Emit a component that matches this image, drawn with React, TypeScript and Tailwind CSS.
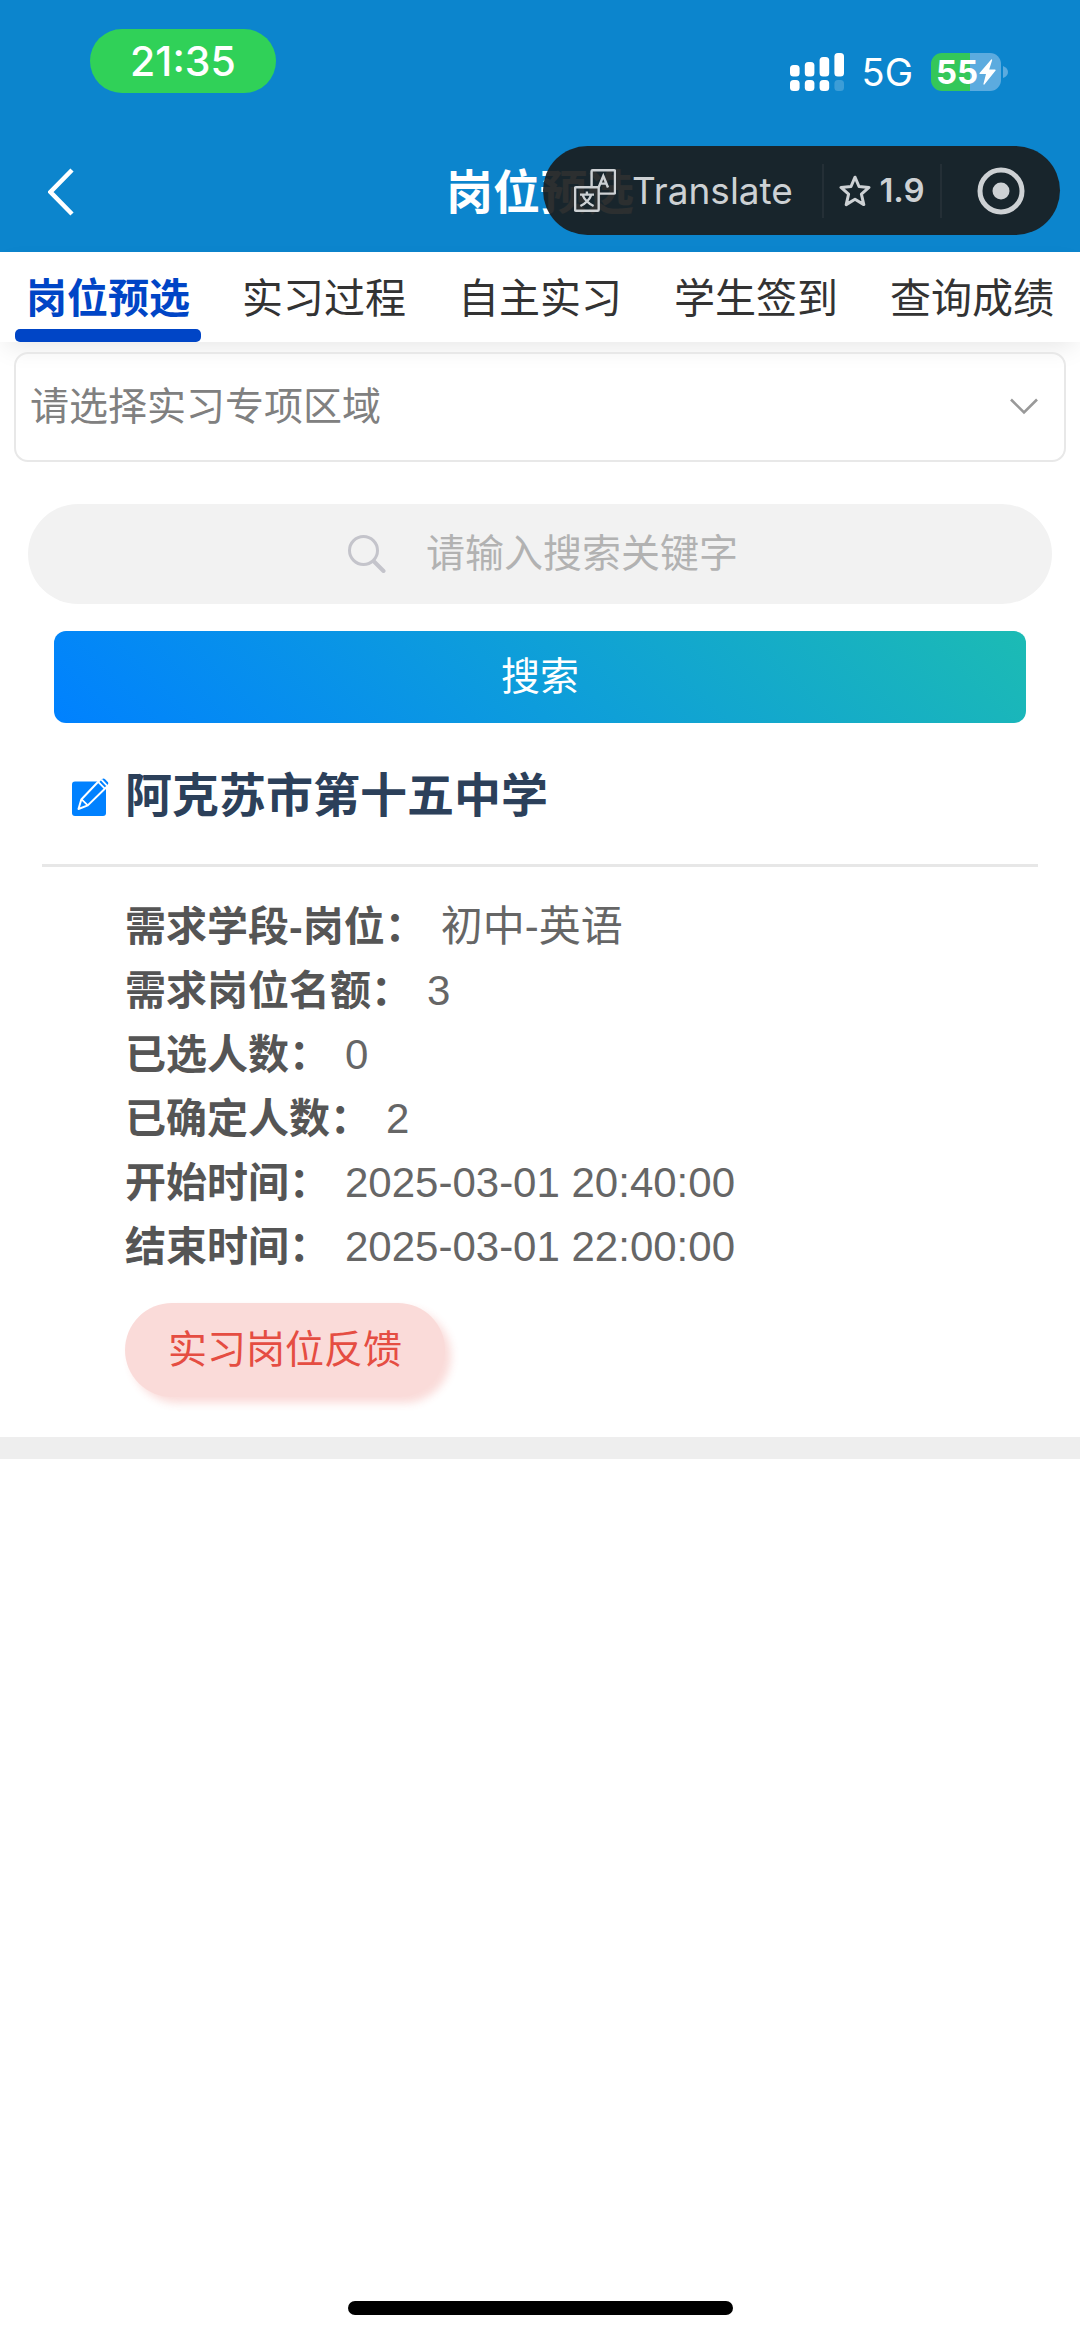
import React, { useState } from "react";

const tabs = ["岗位预选", "实习过程", "自主实习", "学生签到", "查询成绩"];

interface Field {
  label: string;
  value: string;
}

const fields: Field[] = [
  { label: "需求学段-岗位：", value: "初中-英语" },
  { label: "需求岗位名额：", value: "3" },
  { label: "已选人数：", value: "0" },
  { label: "已确定人数：", value: "2" },
  { label: "开始时间：", value: "2025-03-01 20:40:00" },
  { label: "结束时间：", value: "2025-03-01 22:00:00" },
];

const SignalIcon = () => (
  <svg width="54" height="38" viewBox="0 0 54 38" fill="white" aria-hidden="true">
    <rect x="0" y="12" width="9.6" height="11.5" rx="3.5" />
    <rect x="14.8" y="9" width="9.6" height="14.5" rx="3.5" />
    <rect x="29.6" y="4" width="9.6" height="19.5" rx="3.5" />
    <rect x="44.4" y="0" width="9.6" height="23.5" rx="3.5" />
    <rect x="0" y="27" width="9.6" height="11" rx="3.5" />
    <rect x="14.8" y="27" width="9.6" height="11" rx="3.5" />
    <rect x="29.6" y="27" width="9.6" height="11" rx="3.5" />
    <rect x="44.4" y="27" width="9.6" height="11" rx="3.5" opacity="0.2" />
  </svg>
);

const Battery = () => (
  <div className="flex items-center gap-[2px]">
    <div className="flex h-[38px] w-[70px] items-center justify-center gap-px rounded-[11px] bg-[linear-gradient(90deg,#34c759_56%,#5cabdf_56%)] text-[33px] leading-none font-bold text-white">
      <span>55</span>
      <svg width="17" height="26" viewBox="0 0 17 26" fill="white" aria-hidden="true">
        <path d="M12.2 0.4 L0.6 14 Q0 15 1.2 15 H7 L4.4 25 Q4.6 26 5.4 25.4 L16.6 11.6 Q17 10.4 15.8 10.4 H10.2 L13.2 1 Q13 -0.2 12.2 0.4Z" />
      </svg>
    </div>
    <svg width="5" height="12" viewBox="0 0 5 12" fill="#5cabdf" aria-hidden="true">
      <path d="M0 0 Q5 2 5 6 T0 12Z" />
    </svg>
  </div>
);

const StatusBar = () => (
  <div className="flex h-[132px] items-start justify-between pt-[29px] pr-[72px] pl-[90px] font-['Inter',sans-serif] text-white">
    <div className="flex h-16 w-[186px] items-center justify-center rounded-full bg-[#30d158] text-[41px] leading-none font-medium">
      21:35
    </div>
    <div className="flex items-center gap-[18px] pt-6">
      <SignalIcon />
      <span className="text-[38px] leading-none">5G</span>
      <Battery />
    </div>
  </div>
);

const TranslateIcon = () => (
  <svg
    width="42"
    height="43"
    viewBox="0 0 42 43"
    fill="none"
    stroke="currentColor"
    strokeWidth="2.4"
    aria-hidden="true"
  >
    <path d="M17.6 17 V2.2 Q17.6 1.2 18.6 1.2 H40 Q41 1.2 41 2.2 V23.6 Q41 24.6 40 24.6 H25" />
    <rect x="1.1" y="18.2" width="23.6" height="23.6" rx="1" />
    <path d="M24.6 18.5 L29.3 7 L34 18.5 M26.2 14.6 H32.4" />
    <path d="M6 25.6 H20 M12.9 22.4 V25.6 M17.4 25.6 Q14.6 33 6.4 37 M8.4 25.6 Q11.4 33 19.6 37" />
  </svg>
);

const Capsule = () => (
  <div className="absolute top-[14px] right-5 flex h-[89px] w-[517px] items-center rounded-full bg-[rgba(26,29,30,0.92)] font-['Inter',sans-serif] text-[#cdd1d4]">
    <button type="button" className="flex flex-1 items-center gap-4 pl-[31px]">
      <TranslateIcon />
      <span className="text-[37px] leading-none">Translate</span>
    </button>
    <button
      type="button"
      className="flex h-[54px] w-[120px] items-center justify-center gap-2 border-x-2 border-[#242f36] text-[33px] leading-none font-semibold"
    >
      <svg
        width="32"
        height="32"
        viewBox="0 0 32 32"
        fill="none"
        stroke="currentColor"
        strokeWidth="3"
        strokeLinejoin="round"
        aria-hidden="true"
      >
        <path d="M16 2.2 L20 11.5 L30 12.4 L22.4 19.2 L24.8 29.6 L16 24.2 L7.2 29.6 L9.6 19.2 L2 12.4 L12 11.5Z" />
      </svg>
      1.9
    </button>
    <button type="button" aria-label="关闭" className="flex w-[118px] justify-center">
      <svg width="48" height="48" viewBox="0 0 48 48" fill="none" aria-hidden="true">
        <circle cx="24" cy="24" r="21" stroke="currentColor" strokeWidth="5" />
        <circle cx="24" cy="24" r="8.5" fill="currentColor" />
      </svg>
    </button>
  </div>
);

const Header = () => (
  <header className="bg-[#0c85cd]">
    <StatusBar />
    <div className="relative flex h-[120px] items-center justify-center">
      <button type="button" aria-label="返回" className="absolute left-12">
        <svg
          width="26"
          height="48"
          viewBox="0 0 26 48"
          fill="none"
          stroke="white"
          strokeWidth="4.5"
          aria-hidden="true"
        >
          <path d="M24 2 L2.5 24 L24 46" />
        </svg>
      </button>
      <h1 className="text-[47px] leading-none font-semibold text-white">岗位预选</h1>
      <Capsule />
    </div>
  </header>
);

const EditIcon = () => (
  <svg width="38" height="40" viewBox="0 0 38 40" className="flex-none" aria-hidden="true">
    <rect x="0" y="5.5" width="34" height="34.5" rx="3" fill="#0081ff" />
    <path
      d="M6.5 33 L9.3 23.5 L29.5 2.2 Q31.5 0.4 33.6 2.4 L36.4 5.2 Q38.2 7.2 36.4 9.2 L15.8 29.4 Z"
      fill="#0081ff"
      stroke="white"
      strokeWidth="2"
      strokeLinejoin="round"
    />
    <path d="M9.6 23.4 L15.8 29.4 M26.2 5.8 L32.6 12.4 M29.4 3.6 L35 9.6" stroke="white" strokeWidth="1.8" />
  </svg>
);

export default function App() {
  const [active, setActive] = useState(0);

  return (
    <div className="flex min-h-screen flex-col bg-white font-['Liberation_Sans','Noto_Sans_CJK_SC',sans-serif]">
      <Header />
      <nav className="relative flex h-[90px] shadow-[0_10px_24px_-6px_rgba(0,0,0,0.1)]">
        {tabs.map((tab, i) => (
          <button
            key={tab}
            type="button"
            onClick={() => setActive(i)}
            className={`flex flex-1 flex-col items-center justify-between pt-[22px] text-[41px] leading-[50px] ${
              i === active ? "font-semibold text-[#0045c6]" : "text-[#333333]"
            }`}
          >
            {tab}
            {i === active && <span className="h-[13px] w-[186px] rounded-[5px] bg-[#0045c6]" />}
          </button>
        ))}
      </nav>

      <main className="flex-1">
        <div className="relative mx-[14px] mt-[10px]">
          <select
            aria-label="实习专项区域"
            className="h-[110px] w-full appearance-none rounded-[14px] border-2 border-[#e8e8e8] bg-transparent px-[14px] text-[39px] text-[#808080]"
          >
            <option>请选择实习专项区域</option>
          </select>
          <svg
            className="pointer-events-none absolute top-[46px] right-[28px]"
            width="28"
            height="17"
            viewBox="0 0 28 17"
            fill="none"
            stroke="#999999"
            strokeWidth="2.6"
            aria-hidden="true"
          >
            <path d="M1 1.5 L14 14.5 L27 1.5" />
          </svg>
        </div>

        <label className="mx-7 mt-[42px] flex h-[100px] items-center justify-center gap-10 rounded-full bg-[#f2f2f2] pl-2">
          <svg
            width="38"
            height="38"
            viewBox="0 0 38 38"
            fill="none"
            stroke="#c4c4cb"
            strokeLinecap="round"
            aria-hidden="true"
          >
            <circle cx="15.5" cy="15.5" r="14" strokeWidth="3" />
            <path d="M26 26.5 L35.5 36" strokeWidth="4" />
          </svg>
          <input
            type="text"
            aria-label="搜索关键字"
            placeholder="请输入搜索关键字"
            className="w-[314px] bg-transparent text-[39px] outline-none placeholder:text-[#b2b2b2]"
          />
        </label>

        <div className="mt-[27px] px-[54px]">
          <button
            type="button"
            className="h-[92px] w-full rounded-xl bg-[linear-gradient(45deg,#0081ff,#1cbbb4)] text-[39px] text-white"
          >
            搜索
          </button>
        </div>

        <article>
          <div className="mx-[42px] flex h-[144px] items-center gap-[15px] border-b-[3px] border-[#e7e7e7] pt-1 pl-[30px]">
            <EditIcon />
            <h2 className="text-[47px] leading-none font-semibold text-[#2c405a]">阿克苏市第十五中学</h2>
          </div>
          <div className="px-[125px] pt-7 pb-10">
            <dl className="text-[42px] leading-[64px]">
              {fields.map(({ label, value }) => (
                <div key={label} className="flex gap-[15px]">
                  <dt className="text-[41px] font-semibold text-[#555555]">{label}</dt>
                  <dd className="text-[#666666]">{value}</dd>
                </div>
              ))}
            </dl>
            <button
              type="button"
              className="mt-6 h-[94px] w-[320px] rounded-full bg-[#fadbd9] text-[39px] text-[#e54d42] shadow-[6px_6px_8px_rgba(229,77,66,0.2)]"
            >
              实习岗位反馈
            </button>
          </div>
        </article>
        <div className="h-[22px] bg-[#eeeeee]" />
      </main>

      <footer className="flex justify-center pb-[22px]">
        <div className="h-[14px] w-[385px] rounded-full bg-black" />
      </footer>
    </div>
  );
}
